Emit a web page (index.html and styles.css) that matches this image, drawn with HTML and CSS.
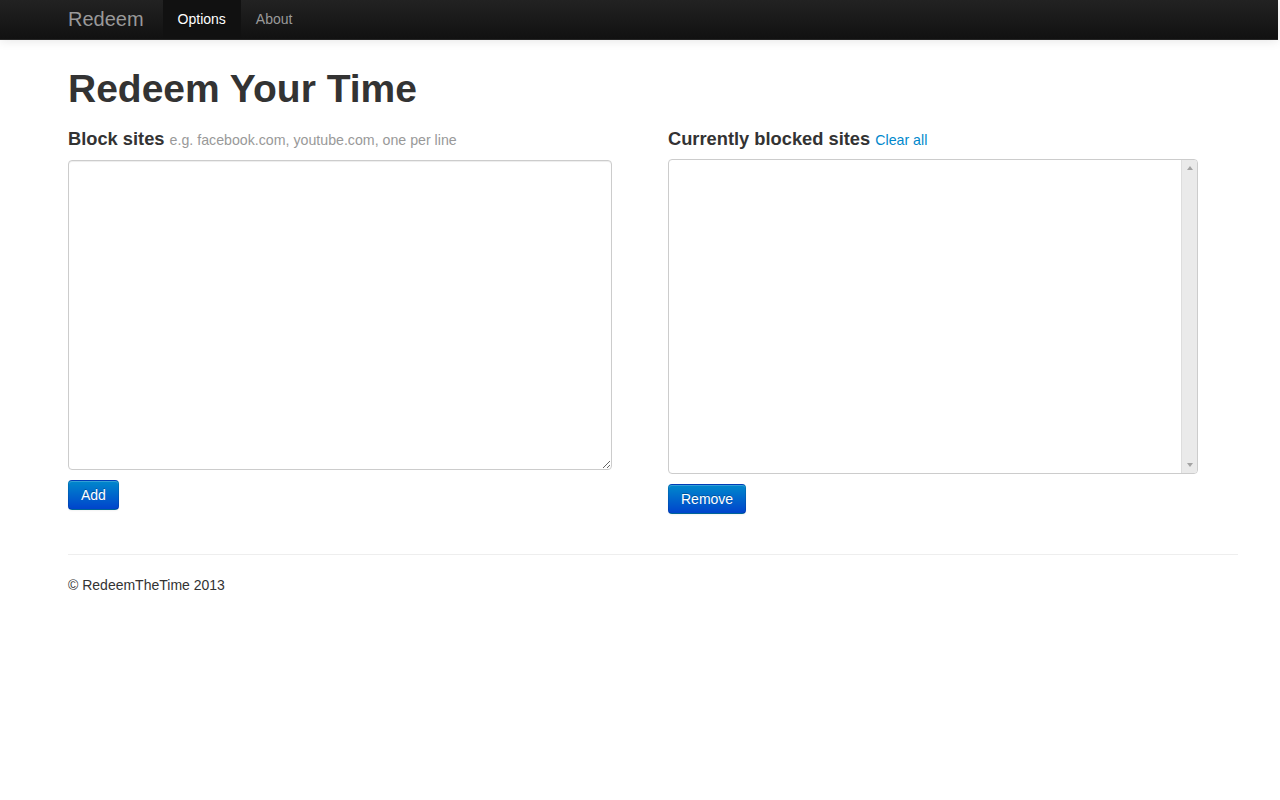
FILE: index.html
```html
<!DOCTYPE html>
<html>
<head>
<meta charset="utf-8">
<title>Redeem</title>
<link rel="stylesheet" href="styles.css">
</head>
<body>
<div class="navbar">
  <div class="nav-inner">
    <a class="brand" href="#">Redeem</a>
    <ul class="nav">
      <li class="active"><a href="#">Options</a></li>
      <li><a href="#">About</a></li>
    </ul>
  </div>
</div>
<div class="container">
  <h1 class="title">Redeem Your Time</h1>
  <div class="row">
    <div class="span6">
      <h4 class="heading">Block sites <small class="hint">e.g. facebook.com, youtube.com, one per line</small></h4>
      <textarea class="sites-input"></textarea>
      <button class="btn btn-add">Add</button>
    </div>
    <div class="span6">
      <h4 class="heading">Currently blocked sites <a class="link" href="#">Clear all</a></h4>
      <div class="listbox">
        <div class="list-content"></div>
        <div class="scrollbar">
          <span class="arrow arrow-up"></span>
          <span class="arrow arrow-down"></span>
        </div>
      </div>
      <button class="btn btn-remove">Remove</button>
    </div>
  </div>
  <hr class="divider">
  <footer class="footer">© RedeemTheTime 2013</footer>
</div>
</body>
</html>
```

FILE: styles.css
```css
html, body {
  margin: 0;
  padding: 0;
  background: #fff;
}
body {
  font-family: "Liberation Sans", Arial, sans-serif;
  font-size: 14px;
  line-height: 20px;
  color: #333;
}
.navbar {
  height: 39px;
  margin-right: 2px;
  background: linear-gradient(to bottom, #222 0%, #111 100%);
  border-bottom: 1px solid #252525;
  box-shadow: 0 1px 10px rgba(0,0,0,0.1);
}
.nav-inner {
  display: flex;
  align-items: stretch;
  padding-left: 48px;
  height: 39px;
}
.brand {
  display: block;
  padding: 8px 19px 8px 20px;
  font-size: 20px;
  line-height: 22px;
  color: #999;
  text-decoration: none;
}
.nav {
  display: flex;
  list-style: none;
  margin: 0;
  padding: 0;
}
.nav li a {
  display: block;
  padding: 9px 15px 10px;
  color: #999;
  text-decoration: none;
  font-size: 14px;
  line-height: 20px;
}
.nav li.active a {
  color: #fff;
  background: #111;
}
.container {
  width: 1170px;
  margin-left: 68px;
}
.title {
  margin: 29px 0 0;
  font-size: 39px;
  line-height: 40px;
  font-weight: bold;
  color: #333;
}
.row {
  display: flex;
  gap: 30px;
  margin-top: 10px;
}
.span6 {
  width: 570px;
}
.heading {
  margin: 9px 0 9px;
  font-size: 18.3px;
  line-height: 22px;
  font-weight: bold;
  color: #333;
}
.hint {
  font-size: 14.2px;
  font-weight: normal;
  color: #999;
}
.link {
  font-size: 14.2px;
  font-weight: normal;
  color: #0088cc;
  text-decoration: none;
}
.sites-input {
  display: block;
  box-sizing: border-box;
  width: 544px;
  height: 310px;
  margin: 0 0 10px;
  padding: 4px 6px;
  border: 1px solid #ccc;
  border-radius: 4px;
  box-shadow: inset 0 1px 1px rgba(0,0,0,0.075);
  font-family: inherit;
  font-size: 14px;
}
.listbox {
  display: flex;
  box-sizing: border-box;
  width: 530px;
  height: 315px;
  margin: -1px 0 10px;
  border: 1px solid #ccc;
  border-radius: 4px;
  overflow: hidden;
}
.list-content {
  flex: 1;
}
.scrollbar {
  width: 15px;
  background: #eaeaea;
  border-left: 1px solid #ddd;
  display: flex;
  flex-direction: column;
  justify-content: space-between;
  align-items: center;
  padding: 6px 0;
}
.arrow {
  width: 0;
  height: 0;
  border-left: 3px solid transparent;
  border-right: 3px solid transparent;
}
.arrow-up {
  border-bottom: 4px solid #a3a3a3;
}
.arrow-down {
  border-top: 4px solid #a3a3a3;
}
.btn {
  display: inline-block;
  padding: 4px 12px;
  font-family: inherit;
  font-size: 14px;
  line-height: 20px;
  color: #fff;
  text-shadow: 0 -1px 0 rgba(0,0,0,0.25);
  background: linear-gradient(to bottom, #0088cc, #0044cc);
  border: 1px solid #0044cc;
  border-color: rgba(0,0,0,0.1) rgba(0,0,0,0.1) rgba(0,0,0,0.25);
  border-radius: 4px;
  box-shadow: inset 0 1px 0 rgba(255,255,255,0.2), 0 1px 2px rgba(0,0,0,0.05);
  cursor: pointer;
}
.divider {
  margin: 40px 0 0;
  border: 0;
  border-top: 1px solid #eee;
  height: 0;
}
.footer {
  margin-top: 20px;
  font-size: 14px;
  line-height: 20px;
}
```
